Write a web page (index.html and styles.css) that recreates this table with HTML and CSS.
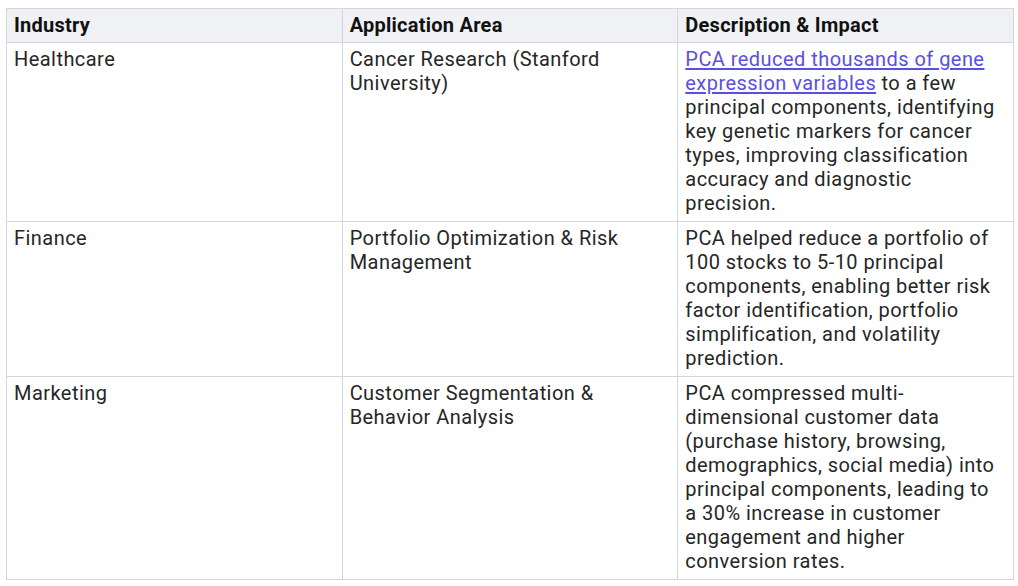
FILE: index.html
```html
<!DOCTYPE html>
<html lang="en">
<head>
<meta charset="utf-8">
<title>PCA Applications</title>
<link rel="stylesheet" href="styles.css">
</head>
<body>
<div class="wrap">
<table class="apps">
<thead>
<tr><th>Industry</th><th>Application Area</th><th>Description &amp; Impact</th></tr>
</thead>
<tbody>
<tr>
<td>Healthcare</td>
<td>Cancer Research (Stanford University)</td>
<td><a href="#">PCA reduced thousands of gene expression variables</a> to a few principal components, identifying key genetic markers for cancer types, improving classification accuracy and diagnostic precision.</td>
</tr>
<tr>
<td>Finance</td>
<td>Portfolio Optimization &amp; Risk Management</td>
<td>PCA helped reduce a portfolio of 100 stocks to 5-10 principal components, enabling better risk factor identification, portfolio simplification, and volatility prediction.</td>
</tr>
<tr>
<td>Marketing</td>
<td>Customer Segmentation &amp; Behavior Analysis</td>
<td>PCA compressed multi-dimensional customer data (purchase history, browsing, demographics, social media) into principal components, leading to a 30% increase in customer engagement and higher conversion rates.</td>
</tr>
</tbody>
</table>
</div>
</body>
</html>
```

FILE: styles.css
```css
html, body {
  margin: 0;
  padding: 0;
  background: #ffffff;
}
.wrap {
  padding: 8px 0 0 6px;
}
.apps {
  width: 1008px;
  border-collapse: collapse;
  table-layout: fixed;
  font-family: Roboto, "Liberation Sans", sans-serif;
  font-size: 20px;
  line-height: 24px;
  letter-spacing: 0.45px;
  color: #262626;
}
.apps th,
.apps td {
  border: 1px solid #d3d6db;
  text-align: left;
  vertical-align: top;
  padding: 4px 12px 6px 7px;
}
.apps th {
  background: #eff1f4;
  font-weight: 700;
  color: #111111;
  letter-spacing: 0.25px;
  padding: 4px 12px 5px 7px;
}
.apps a {
  color: #5b4fe3;
  text-decoration: underline;
  text-underline-offset: 2px;
}
```
